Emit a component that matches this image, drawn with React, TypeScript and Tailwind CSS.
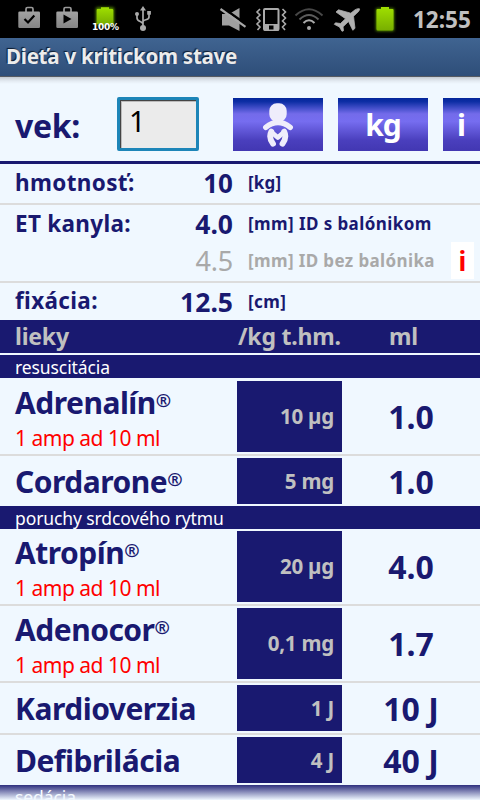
import type { ReactNode } from 'react';

type Drug = { name: string; reg?: boolean; note?: string; dose: string; value: string };

const resuscitation: Drug[] = [
  { name: 'Adrenalín', reg: true, note: '1 amp ad 10 ml', dose: '10 µg', value: '1.0' },
  { name: 'Cordarone', reg: true, dose: '5 mg', value: '1.0' },
];

const rhythm: Drug[] = [
  { name: 'Atropín', reg: true, note: '1 amp ad 10 ml', dose: '20 µg', value: '4.0' },
  { name: 'Adenocor', reg: true, note: '1 amp ad 10 ml', dose: '0,1 mg', value: '1.7' },
  { name: 'Kardioverzia', dose: '1 J', value: '10 J' },
  { name: 'Defibrilácia', dose: '4 J', value: '40 J' },
];

function StatusIcons() {
  return (
    <svg width="400" height="38" viewBox="0 0 400 38" className="shrink-0">
      <defs>
        <linearGradient id="bag" x1="0" y1="0" x2="0" y2="1">
          <stop offset="0" stopColor="#a2a2a2" />
          <stop offset="1" stopColor="#858585" />
        </linearGradient>
        <linearGradient id="battery" x1="0" y1="0" x2="0" y2="1">
          <stop offset="0" stopColor="#a0e000" />
          <stop offset="1" stopColor="#78ae00" />
        </linearGradient>
        <filter id="glow" x="-50%" y="-50%" width="200%" height="200%">
          <feGaussianBlur stdDeviation="1.6" />
        </filter>
      </defs>

      {/* bags */}
      <path d="M26 12V9Q26 7.500 27.500 7.500H31.500Q33 7.500 33 9V12" fill="none" stroke="#999" strokeWidth="1.700" />
      <rect x="18.300" y="11.500" width="21.700" height="16.500" rx="1.300" fill="url(#bag)" />
      <path d="M24.500 19L28 22.500L34.300 15.500" fill="none" stroke="#000" strokeWidth="2.200" />
      <path d="M64 12V9Q64 7.500 65.500 7.500H69.500Q71 7.500 71 9V12" fill="none" stroke="#999" strokeWidth="1.700" />
      <rect x="56.300" y="11.500" width="21.700" height="16.500" rx="1.300" fill="url(#bag)" />
      <path d="M63.500 14.500L71.500 19L63.500 23.500Z" fill="#000" />

      {/* charge level */}
      <rect x="96" y="7.500" width="18" height="18" rx="1" fill="#5f9a00" filter="url(#glow)" />
      <path d="M97.500 9H101V7.300H109V9H112Q113.300 9 113.300 10.300V24H96.700V10.300Q96.700 9 97.500 9Z" fill="url(#battery)" />

      {/* usb */}
      <path d="M143 9V28M143 24.500C143 20.500 137 22.500 137 18V14.500M143 22C143 18.500 149 21 149 17V13" fill="none" stroke="#aaa" strokeWidth="1.700" />
      <g fill="#aaa">
        <path d="M143 6L146 10.500H140Z" />
        <circle cx="143" cy="28" r="3" />
        <circle cx="137" cy="14" r="2" />
        <rect x="147.200" y="11" width="3.700" height="3.700" />
      </g>

      {/* muted speaker */}
      <path d="M222 14H229L239.500 8V31L229 25.500H222Z" fill="#a0a0a0" />
      <path d="M221 6.500L246 24.300" stroke="#000" strokeWidth="2.500" />
      <path d="M220.500 9L245.500 26.800" stroke="#a8a8a8" strokeWidth="2.200" />

      {/* vibrate */}
      <rect x="264" y="9" width="14.500" height="21" rx="1" fill="none" stroke="#aaa" strokeWidth="2" />
      <path d="M264 24H279V30.500H264Z" fill="#aaa" />
      <rect x="269" y="25.500" width="4.500" height="4" fill="#000" />
      <path d="M260 9L257 12L260 15L257 18L260 21L257 24L260 27L257.500 30M282.500 9L285.500 12L282.500 15L285.500 18L282.500 21L285.500 24L282.500 27L285 30" fill="none" stroke="#aaa" strokeWidth="1.600" />

      {/* wifi */}
      <g fill="none" strokeWidth="2">
        <path d="M295.500 15.500Q309 3 322.500 15.500" stroke="#484848" />
        <path d="M299.500 19.500Q309 10.500 318.500 19.500" stroke="#5c5c5c" />
        <path d="M303.500 23Q309 17.500 314.500 23" stroke="#aaa" />
      </g>
      <circle cx="309" cy="28" r="2" fill="#aaa" />

      {/* plane */}
      <path d="M359.500 8.800C357.500 8.300 355.500 9.300 353.500 11L350.800 13.200L338.500 9.800L336 12L345.500 18.700L340.500 23.500L335.500 22.800L334.300 24.300L339.500 27L342 31.300L343.500 30.700L343 26.800L348.500 21.500L352.800 30.300L355 28.300L353.500 16.200L356.500 13.500C358.500 11.800 360 9.800 359.500 8.800Z" fill="#b0b0b0" stroke="#b0b0b0" strokeWidth="0.800" strokeLinejoin="round" />

      {/* battery */}
      <rect x="376" y="8.500" width="18" height="22.500" rx="1" fill="#5f9a00" filter="url(#glow)" />
      <path d="M377.500 9H381V7H389V9H392.500Q393.500 9 393.500 10V29Q393.500 30.500 392 30.500H378Q376.500 30.500 376.500 29V10Q376.500 9 377.500 9Z" fill="url(#battery)" />
    </svg>
  );
}

function BabyIcon() {
  return (
    <svg width="32" height="44" viewBox="0 0 32 44" className="block">
      <g fill="none" stroke="#efedfb" strokeLinecap="round" strokeLinejoin="round">
        <rect x="8.800" y="1.700" width="14.400" height="15.600" rx="6" fill="#efedfb" strokeWidth="3" />
        <path d="M3.800 24.300Q16 14.500 28.200 24.300" strokeWidth="5.500" />
        <path d="M9.300 28.500Q6.300 34.500 11 40.800M22.200 28.500Q25.200 34.500 20.500 40.800" strokeWidth="5.800" />
        <path d="M10.500 30L15.800 34.500L21 30" strokeWidth="4.800" />
      </g>
    </svg>
  );
}

function NavButton({ children }: { children: ReactNode }) {
  return (
    <button className="flex h-[53px] w-[90px] shrink-0 items-center justify-center bg-[linear-gradient(180deg,#03259a_0%,#0d2ea5_7%,#736bea_30%,#766df0_44%,#4a3fbd_80%,#4237b2_100%)] text-[30px] font-bold tracking-[-1px] text-white">
      {children}
    </button>
  );
}

function Section({ title }: { title: string }) {
  return (
    <div className="h-[23px] bg-[#191970] pl-[15px] text-[17.5px] leading-[25px] tracking-[-0.1px] text-white">
      {title}
    </div>
  );
}

function DrugRow({ drug, last }: { drug: Drug; last: boolean }) {
  return (
    <div className={last ? 'flex py-0.5' : 'flex border-b-2 border-[#dcdcdc] py-0.5'}>
      <div className="w-[237px] pl-[15px]">
        <div className={drug.note ? 'flex h-[43px] text-[30px] leading-[43px] font-bold tracking-[-0.5px]' : 'flex h-[46px] text-[30px] leading-[48px] font-bold tracking-[-0.5px]'}>
          {drug.name}
          {drug.reg && <span className="relative -top-[3px] text-[18.5px]">®</span>}
        </div>
        {drug.note && <div className="h-7 text-[21px] leading-[28px] tracking-[-0.5px] text-[#ff0000]">{drug.note}</div>}
      </div>
      <div className={drug.note ? 'flex w-[105px] items-center justify-end bg-[#191970] pr-2 pb-px text-[20.5px] font-bold tracking-[-0.2px] text-[#c0c0c0]' : 'flex w-[105px] items-center justify-end bg-[#191970] pr-2 text-[20.5px] font-bold tracking-[-0.2px] text-[#c0c0c0]'}>
        {drug.dose}
      </div>
      <div className={drug.note ? 'flex w-[138px] items-center justify-center text-[32px] leading-[46px] font-bold' : 'flex w-[138px] items-center justify-center pt-px text-[32px] leading-[45px] font-bold'}>
        {drug.value}
      </div>
    </div>
  );
}

export default function App() {
  return (
    <div className="relative h-[800px] w-[480px] overflow-hidden bg-[#f0f8ff] font-['Noto_Sans',sans-serif] whitespace-nowrap text-[#191970]">
      {/* Status bar */}
      <div className="relative flex h-[38px] bg-black">
        <StatusIcons />
        <span className="absolute top-[21px] left-[92px] font-['DejaVu_Sans',sans-serif] text-[9px] leading-[12px] font-bold tracking-[-0.3px] text-white">100%</span>
        <span className="pl-[13px] text-[22.5px] leading-[39px] font-bold text-[#c0c0c0]">12:55</span>
      </div>

      {/* Title bar */}
      <div className="h-[39px] border-b border-[#555a62] bg-linear-to-b from-[#406491] to-[#2e4e79] pl-1.5 text-[20.5px] leading-[37px] font-bold tracking-[-0.25px] text-[#ececec] [text-shadow:-1px_-1px_1px_#0c1c30]">
        Dieťa v kritickom stave
      </div>

      {/* Age form */}
      <div className="flex h-[87px] border-b-3 border-[#191970] bg-[linear-gradient(180deg,#c3cad2_0px,#e4ebf2_4px,#f0f8ff_7px)] pt-5 pl-[15px]">
        <label className="w-[102px] text-[32px] leading-[57px] font-bold tracking-[-0.3px]">vek:</label>
        <div className="h-[54px] w-[82px] shrink-0 rounded-[2px] border-3 border-[#1d85b8] bg-[#ebebeb] pl-[9px] text-[29px] leading-[41px] text-black shadow-[inset_1px_1px_0_#444,inset_2px_2px_0_#bbb]">
          1
        </div>
        <div className="ml-[34px] flex gap-[15px] pt-px">
          <NavButton><BabyIcon /></NavButton>
          <NavButton>kg</NavButton>
          <button className="h-[53px] w-[37px] shrink-0 bg-[linear-gradient(180deg,#03259a_0%,#0d2ea5_7%,#736bea_30%,#766df0_44%,#4a3fbd_80%,#4237b2_100%)] text-[30px] leading-[53px] font-bold text-white">i</button>
        </div>
      </div>

      {/* Vitals */}
      <div className="flex h-[41px] border-b-2 border-[#dcdcdc] pl-[15px] font-bold">
        <span className="w-[130px] text-[22.5px] leading-[37px] tracking-[0.35px]">hmotnosť:</span>
        <span className="w-[88px] text-right text-[26px] leading-[39px]">10</span>
        <span className="pl-[15px] text-[17px] leading-[37px] tracking-[0.2px]">[kg]</span>
      </div>
      <div className="h-[78px] border-b-2 border-[#dcdcdc] pl-[15px] font-bold">
        <div className="flex h-[38px]">
          <span className="w-[130px] text-[22.5px] leading-[37px] tracking-[0.3px]">ET kanyla:</span>
          <span className="w-[88px] text-right text-[26.5px] leading-[39px]">4.0</span>
          <span className="pl-[15px] text-[17px] leading-[37px] tracking-[0.42px]">[mm] ID s balónikom</span>
        </div>
        <div className="flex h-[38px] text-[#a9a9a9]">
          <span className="w-[218px] text-right text-[27px] leading-[36px] font-normal tracking-[-0.2px]">4.5</span>
          <span className="w-[218px] pl-[15px] text-[17px] leading-[35px] tracking-[0.38px]">[mm] ID bez balónika</span>
          <span className="-mt-px h-[37px] w-[23px] bg-white text-center text-[26px] leading-[38px] text-[#ff0000]">i</span>
        </div>
      </div>
      <div className="flex h-[37px] pl-[15px] font-bold">
        <span className="w-[130px] text-[22.5px] leading-[35px] tracking-[0.35px]">fixácia:</span>
        <span className="w-[88px] text-right text-[26.5px] leading-[38px]">12.5</span>
        <span className="pl-[15px] text-[17px] leading-[37px] tracking-[0.4px]">[cm]</span>
      </div>

      {/* Drug table */}
      <div className="mb-0.5 flex h-[33px] bg-[#191970] pl-[15px] text-[23px] leading-[32px] font-bold tracking-[-0.2px] text-[#c0c0c0]">
        <span className="w-[223px]">lieky</span>
        <span className="w-[151px]">/kg t.hm.</span>
        <span>ml</span>
      </div>
      <Section title="resuscitácia" />
      <div className="pt-px">
        {resuscitation.map((d, i) => (
          <DrugRow key={d.name} drug={d} last={i === resuscitation.length - 1} />
        ))}
      </div>
      <Section title="poruchy srdcového rytmu" />
      {rhythm.map((d, i) => (
        <DrugRow key={d.name} drug={d} last={i === rhythm.length - 1} />
      ))}
      <Section title="sedácia" />

      {/* Scroll edge fade */}
      <div className="absolute bottom-0 left-0 h-[15px] w-full bg-linear-to-b from-[#f0f8ff]/10 to-[#f0f8ff]" />
    </div>
  );
}
